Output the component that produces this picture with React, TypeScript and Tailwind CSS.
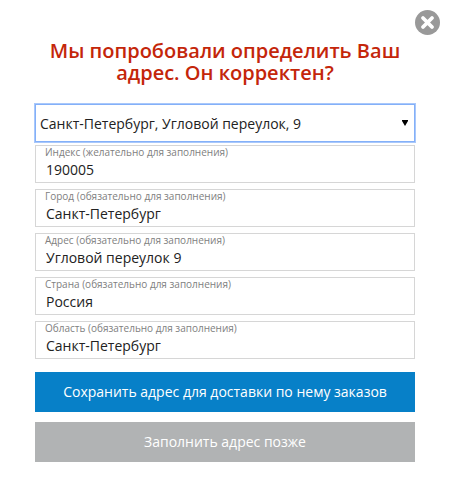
import React, { useState } from 'react';

interface AddressField {
  id: string;
  label: string;
  value: string;
}

const initialFields: AddressField[] = [
  { id: 'postcode', label: 'Индекс (желательно для заполнения)', value: '190005' },
  { id: 'city', label: 'Город (обязательно для заполнения)', value: 'Санкт-Петербург' },
  { id: 'address', label: 'Адрес (обязательно для заполнения)', value: 'Угловой переулок 9' },
  { id: 'country', label: 'Страна (обязательно для заполнения)', value: 'Россия' },
  { id: 'region', label: 'Область (обязательно для заполнения)', value: 'Санкт-Петербург' },
];

const CloseIcon: React.FC = () => (
  <svg viewBox="0 0 25 25" className="block h-[25px] w-[25px]" aria-hidden="true">
    <circle cx="12.5" cy="12.5" r="12.5" fill="#999999" />
    <path
      d="M8 8l9 9M17 8l-9 9"
      stroke="#ffffff"
      strokeWidth="3.8"
      strokeLinecap="round"
      fill="none"
    />
  </svg>
);

export default function App() {
  const [fields, setFields] = useState(initialFields);

  const updateField = (id: string, value: string) => {
    setFields(fields.map((field) => (field.id === id ? { ...field, value } : field)));
  };

  return (
    <div className="relative min-h-screen bg-white px-[35px] pt-10 pb-4 font-['Open_Sans','Noto_Sans',sans-serif]">
      <button type="button" aria-label="Закрыть" className="absolute top-[10px] right-[10px]">
        <CloseIcon />
      </button>

      <h1 className="text-center text-[20px] leading-[22px] font-semibold text-[#c4260a]">
        Мы попробовали определить Ваш адрес. Он корректен?
      </h1>

      <form className="mt-5" onSubmit={(e) => e.preventDefault()}>
        {/* Suggested address */}
        <div className="relative">
          <select
            aria-label="Адрес"
            className="block h-[38px] w-full appearance-none border border-[#84b0f8] bg-white pl-1 text-[14px] text-[#222222] ring-1 ring-[#a9c8fb] outline-none"
          >
            <option>Санкт-Петербург, Угловой переулок, 9</option>
          </select>
          <svg
            viewBox="0 0 6 6"
            className="pointer-events-none absolute top-4 right-[7px] h-[6px] w-[6px]"
            aria-hidden="true"
          >
            <path d="M0 0h6v1L3 6 0 1z" fill="#000000" />
          </svg>
        </div>

        {/* Address details */}
        <div className="mt-[3px] flex flex-col gap-[6px]">
          {fields.map((field) => (
            <div key={field.id} className="h-[38px] border border-[#d6d6d6] px-[9px]">
              <label htmlFor={field.id} className="block text-[10px] leading-[13px] text-[#808080]">
                {field.label}
              </label>
              <input
                id={field.id}
                type="text"
                value={field.value}
                onChange={(e) => updateField(field.id, e.target.value)}
                className="block h-5 w-full pl-px text-[14px] text-[#222222] outline-none"
              />
            </div>
          ))}
        </div>

        <div className="mt-[13px] flex flex-col gap-[10px] text-[14px] font-medium text-white">
          <button type="submit" className="h-10 bg-[#0780c8] pb-px">
            Сохранить адрес для доставки по нему заказов
          </button>
          <button type="button" className="h-10 bg-[#b1b3b4] pb-px">
            Заполнить адрес позже
          </button>
        </div>
      </form>
    </div>
  );
}
